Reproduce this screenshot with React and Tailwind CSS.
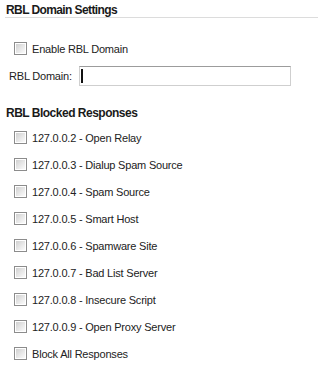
import React from 'react';

const responses = [
    '127.0.0.2 - Open Relay',
    '127.0.0.3 - Dialup Spam Source',
    '127.0.0.4 - Spam Source',
    '127.0.0.5 - Smart Host',
    '127.0.0.6 - Spamware Site',
    '127.0.0.7 - Bad List Server',
    '127.0.0.8 - Insecure Script',
    '127.0.0.9 - Open Proxy Server',
    'Block All Responses',
];

// old-style grey checkbox, unchecked
const Box = () => (
    <span className="w-[13px] h-[13px] shrink-0 border border-[#8c8c8c] bg-white p-[1px] flex">
        <span className="flex-1 bg-gradient-to-br from-[#d0d0d0] via-[#e6e6e6] to-[#fbfbfb]" />
    </span>
);

const CheckRow = ({ label }) => (
    <div className="h-[27px] flex items-center pl-[14px] gap-[5px]">
        <Box />
        <span className="text-[11px] tracking-[-0.2px] text-[#222] pt-[1px]">{label}</span>
    </div>
);

const App = () => {
    return (
        <div className="w-[319px] h-[372px] bg-white overflow-hidden font-['Liberation_Sans',Arial,sans-serif]">
            {/* RBL Domain Settings */}
            <div className="ml-[5px] mr-[1px] pl-[1px] pt-[4px] h-[18px] border-b border-[#dcdcdc] leading-[13px] text-[12px] font-bold tracking-[-0.6px] text-[#1a1a1a]">
                RBL Domain Settings
            </div>
            <div className="mt-[17px]">
                <CheckRow label="Enable RBL Domain" />
            </div>
            <div className="h-[28px] flex items-center">
                <span className="w-[79px] pl-[9px] text-[11px] tracking-[-0.2px] text-[#222] pt-[1px]">RBL Domain:</span>
                <div className="w-[212px] h-[20px] border border-[#cfcfcf] border-t-[#9c9c9c] flex items-center pl-[1px]">
                    <span className="w-[2px] h-[14px] bg-[#111]" />
                </div>
            </div>

            {/* RBL Blocked Responses */}
            <div className="mt-[15px] ml-[6px] h-[16px] leading-[16px] text-[12px] font-bold tracking-[-0.5px] text-[#1a1a1a]">
                RBL Blocked Responses
            </div>
            <div className="mt-[3px]">
                {responses.map((r) => (
                    <CheckRow key={r} label={r} />
                ))}
            </div>
        </div>
    );
};

export default App;
